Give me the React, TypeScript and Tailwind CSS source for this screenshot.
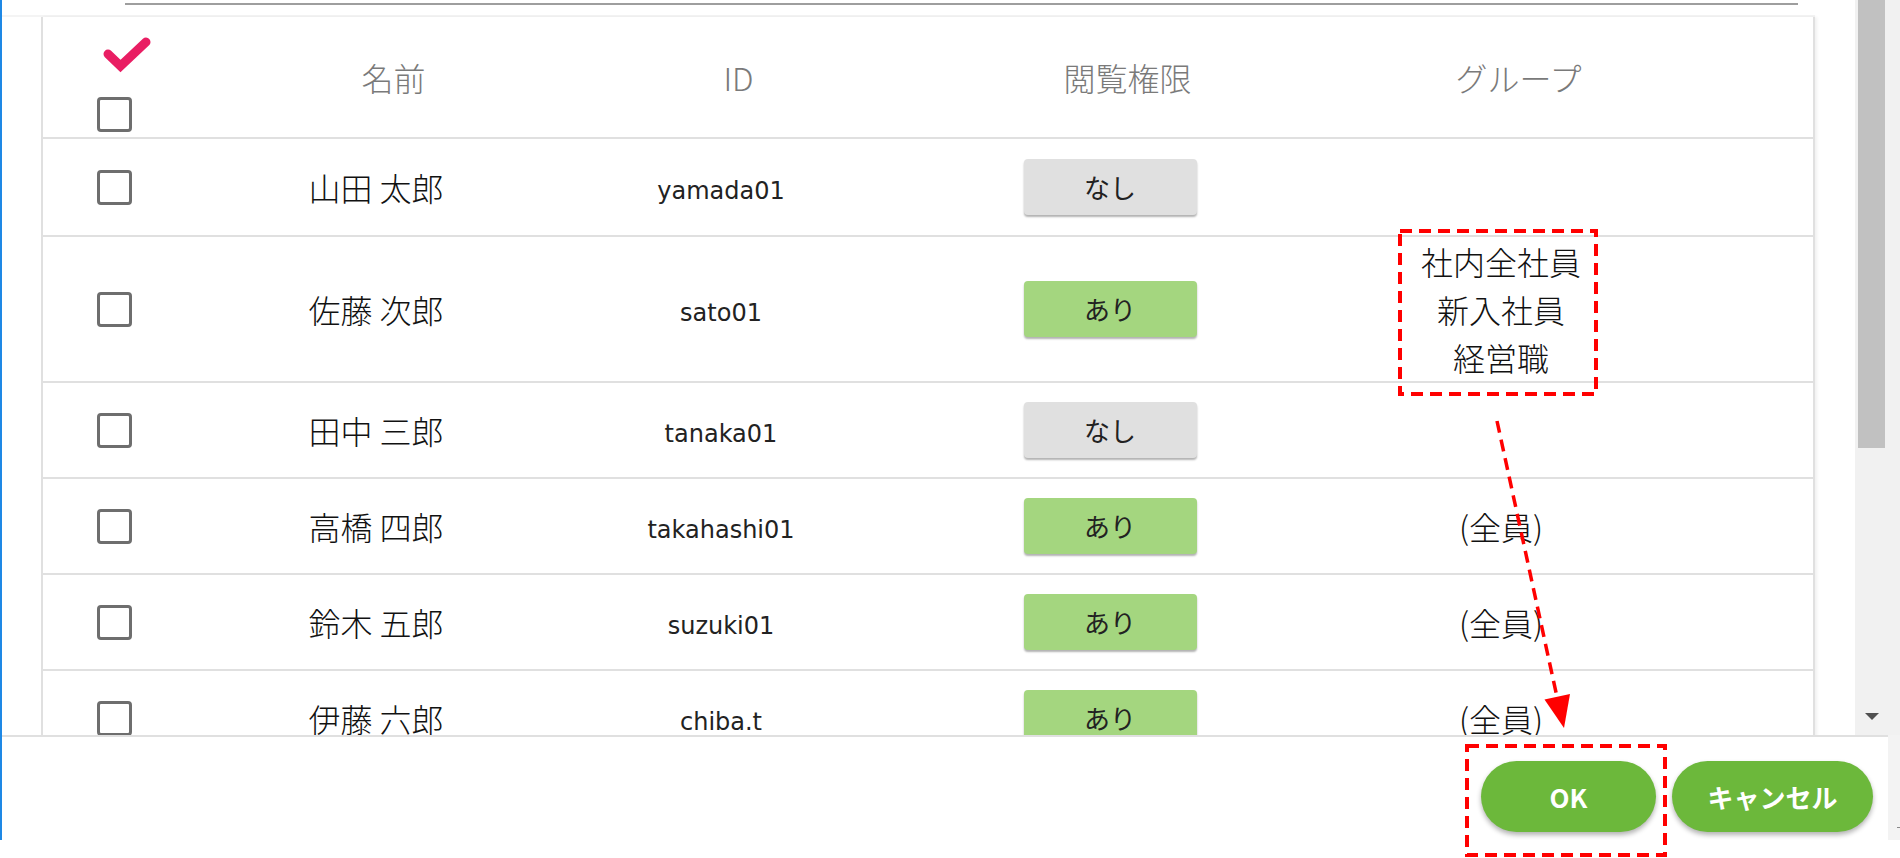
import React from "react";

const JP = "font-['Noto_Sans_CJK_JP',sans-serif]";

type Row = {
  name: string;
  id: string;
  perm: boolean;
  group: string[];
  h: string;
};

const rows: Row[] = [
  { name: "山田 太郎", id: "yamada01", perm: false, group: [], h: "h-[98px]" },
  {
    name: "佐藤 次郎",
    id: "sato01",
    perm: true,
    group: ["社内全社員", "新入社員", "経営職"],
    h: "h-[146px]",
  },
  { name: "田中 三郎", id: "tanaka01", perm: false, group: [], h: "h-[96px]" },
  { name: "高橋 四郎", id: "takahashi01", perm: true, group: ["(全員)"], h: "h-[96px]" },
  { name: "鈴木 五郎", id: "suzuki01", perm: true, group: ["(全員)"], h: "h-[96px]" },
  { name: "伊藤 六郎", id: "chiba.t", perm: true, group: ["(全員)"], h: "h-[96px]" },
];

function Checkbox() {
  return (
    <div className="w-[35px] h-[35px] rounded-[4px] border-[3px] border-[#6e6e6e] bg-white" />
  );
}

function PermButton({ on }: { on: boolean }) {
  return (
    <div
      className={`w-[173px] h-[56px] rounded-[4px] flex items-center justify-center text-[26px] leading-none text-[#222] shadow-[0_2px_2px_rgba(0,0,0,0.3)] ${JP} ${
        on ? "bg-[#a4d67f]" : "bg-[#e0e0e0]"
      }`}
    >
      {on ? "あり" : "なし"}
    </div>
  );
}

const GRID = "grid grid-cols-[142px_382px_308px_470px_312px_1fr]";
const HEAD = `pl-[35px] text-center text-[32px] leading-none font-light text-[#7a7a7a] ${JP}`;

export default function App() {
  return (
    <div className="relative w-[1900px] h-[858px] bg-white overflow-hidden">
      <div className="flex flex-col h-[840px] border-l-2 border-[#1e88e5]">
        {/* top: list + scrollbar */}
        <div className="flex h-[735px]">
          <div className="flex-1 overflow-hidden">
            <div className="mt-[3px] ml-[123px] mr-[57px] h-[2px] bg-[#9e9e9e]" />
            <div className="mt-[10px] mr-[40px] h-[2px] bg-[#f4f4f4]" />
            <div className="ml-[39px] mr-[40px] border-x-2 border-[#e0e0e0] shadow-[2px_0_3px_rgba(0,0,0,0.06)] bg-white">
              {/* header */}
              <div className={`${GRID} h-[122px] items-center border-b-2 border-[#e0e0e0]`}>
                <div className="self-start flex flex-col items-start pl-[54px] pt-[20px]">
                  <svg width="48" height="36" viewBox="0 0 48 36" className="ml-[6px]">
                    <path
                      d="M5 17 L17.5 29 L43 5"
                      fill="none"
                      stroke="#e91e63"
                      strokeWidth="9"
                      strokeLinecap="round"
                      strokeLinejoin="miter"
                    />
                  </svg>
                  <div className="mt-[24px]">
                    <Checkbox />
                  </div>
                </div>
                <div className={HEAD}>名前</div>
                <div className={HEAD}>ID</div>
                <div className={HEAD}>閲覧権限</div>
                <div className={HEAD}>グループ</div>
                <div />
              </div>
              {/* rows */}
              {rows.map((r) => (
                <div
                  key={r.id}
                  className={`${GRID} items-center border-b-2 border-[#e0e0e0] ${r.h}`}
                >
                  <div className="flex justify-center">
                    <Checkbox />
                  </div>
                  <div className={`text-center text-[32px] leading-none font-light text-[#111] ${JP}`}>
                    {r.name}
                  </div>
                  <div className="pt-[8px] text-center text-[24px] leading-none text-[#222] font-['DejaVu_Sans',sans-serif]">
                    {r.id}
                  </div>
                  <div className="flex justify-center">
                    <PermButton on={r.perm} />
                  </div>
                  <div className={`text-center text-[32px] leading-[48px] font-light text-[#111] ${JP}`}>
                    {r.group.map((g, i) => (
                      <div key={i}>{g}</div>
                    ))}
                  </div>
                  <div />
                </div>
              ))}
            </div>
          </div>
          {/* scrollbar */}
          <div className="w-[45px] bg-[#f1f1f1] flex flex-col">
            <div className="ml-[3px] w-[27px] h-[448px] bg-[#c1c1c1]" />
            <div className="mt-auto mb-[15px] ml-[10px] w-0 h-0 border-x-[7px] border-x-transparent border-t-[7px] border-t-[#505050]" />
          </div>
        </div>
        {/* footer */}
        <div className="flex h-[105px]">
          <div className="flex-1 border-t-2 border-[#e0e0e0] bg-white flex justify-end items-start pt-[24px] pr-[15px] gap-[16px]">
            <button
              className={`w-[175px] h-[71px] rounded-full bg-[#6cb83b] text-white font-bold text-[26px] leading-none shadow-[0_3px_5px_rgba(0,0,0,0.3)] ${JP}`}
            >
              OK
            </button>
            <button
              className={`w-[201px] h-[71px] rounded-full bg-[#6cb83b] text-white font-bold text-[26px] leading-none shadow-[0_3px_5px_rgba(0,0,0,0.3)] ${JP}`}
            >
              キャンセル
            </button>
          </div>
          <div className="w-[12px] bg-[#f3f3f3] flex flex-col">
            <div className="mt-[92px] ml-[9px] w-[3px] h-[1px] bg-[#888]" />
          </div>
        </div>
      </div>

      {/* annotation overlay */}
      <svg
        className="absolute left-0 top-0 pointer-events-none"
        width="1900"
        height="858"
        viewBox="0 0 1900 858"
      >
        <rect
          x="1400"
          y="231"
          width="196"
          height="163"
          fill="none"
          stroke="#ff0000"
          strokeWidth="4"
          strokeDasharray="12 7"
        />
        <rect
          x="1467"
          y="746"
          width="198"
          height="109"
          fill="none"
          stroke="#ff0000"
          strokeWidth="4"
          strokeDasharray="12 7"
        />
        <line
          x1="1497"
          y1="421"
          x2="1557"
          y2="697"
          stroke="#ff0000"
          strokeWidth="3.5"
          strokeDasharray="12 7"
        />
        <polygon points="1564,728 1544.5,699.5 1570,694" fill="#ff0000" />
      </svg>
    </div>
  );
}
